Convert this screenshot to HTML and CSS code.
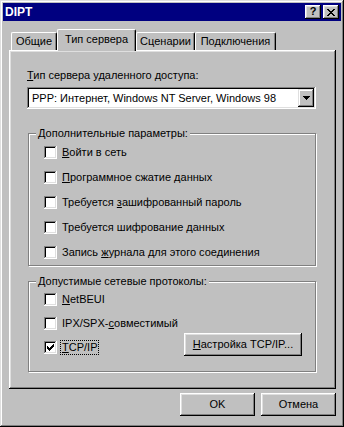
FILE: index.html
```html
<!DOCTYPE html>
<html>
<head>
<meta charset="utf-8">
<link rel="stylesheet" href="styles.css">
</head>
<body>
<div class="window">
  <div class="titlebar">
    <span class="title">DIPT</span>
    <div class="tbtns">
      <div class="tbtn help">?</div>
      <div class="tbtn close">
        <svg width="8" height="7" viewBox="0 0 8 7" shape-rendering="crispEdges">
          <path d="M0 0h2v1h-2zM6 0h2v1h-2zM1 1h2v1h-2zM5 1h2v1h-2zM2 2h4v1h-4zM3 3h2v1h-2zM2 4h4v1h-4zM1 5h2v1h-2zM5 5h2v1h-2zM0 6h2v1h-2zM6 6h2v1h-2z" fill="#000"/>
        </svg>
      </div>
    </div>
  </div>
  <div class="body">
    <div class="tabs">
      <div class="tab t1">Общие</div>
      <div class="tab t2 active">Тип сервера</div>
      <div class="tab t3">Сценарии</div>
      <div class="tab t4">Подключения</div>
    </div>
    <div class="panel">
      <div class="label"><u>Т</u>ип сервера удаленного доступа:</div>
      <div class="combo">
        <span class="combo-text">PPP: Интернет, Windows NT Server, Windows 98</span>
        <span class="combo-btn">
          <svg width="7" height="4" viewBox="0 0 7 4" shape-rendering="crispEdges"><path d="M0 0h7v1h-7zM1 1h5v1h-5zM2 2h3v1h-3zM3 3h1v1h-1z" fill="#000"/></svg>
        </span>
      </div>
      <div class="group g1">
        <div class="legend">Дополнительные параметры:</div>
        <div class="row"><span class="cb"></span><span class="txt"><u>В</u>ойти в сеть</span></div>
        <div class="row"><span class="cb"></span><span class="txt"><u>П</u>рограммное сжатие данных</span></div>
        <div class="row"><span class="cb"></span><span class="txt">Требуется <u>з</u>ашифрованный пароль</span></div>
        <div class="row"><span class="cb"></span><span class="txt">Требуется шифрование данных</span></div>
        <div class="row"><span class="cb"></span><span class="txt">Запись <u>ж</u>урнала для этого соединения</span></div>
      </div>
      <div class="group g2">
        <div class="legend">Допустимые сетевые протоколы:</div>
        <div class="row2"><span class="cb"></span><span class="txt"><u>N</u>etBEUI</span></div>
        <div class="row2"><span class="cb"></span><span class="txt">IPX/SPX-<u>с</u>овместимый</span></div>
        <div class="row2">
          <span class="cb checked">
            <svg width="7" height="7" viewBox="0 0 7 7" shape-rendering="crispEdges"><path d="M6 0h1v1h-1zM5 1h2v1h-2zM0 2h1v1h-1zM4 2h3v1h-3zM0 3h2v1h-2zM3 3h3v1h-3zM0 4h5v1h-5zM1 5h3v1h-3zM2 6h1v1h-1z" fill="#000"/></svg>
          </span>
          <span class="txt focus"><u>Т</u>CP/IP</span>
          <div class="btn setup"><u>Н</u>астройка TCP/IP...</div>
        </div>
      </div>
    </div>
    <div class="buttons">
      <div class="btn dlg">OK</div>
      <div class="btn dlg">Отмена</div>
    </div>
  </div>
</div>
</body>
</html>
```
FILE: styles.css
```css
* { box-sizing: border-box; }
html, body { margin: 0; padding: 0; background: #c0c0c0; }
body {
  font-family: "Liberation Sans", Arial, sans-serif;
  font-size: 11px;
  line-height: 13px;
  color: #000;
}
u { text-decoration: underline; text-underline-offset: 1px; }
.window {
  width: 344px;
  height: 427px;
  padding: 3px;
  background: #c0c0c0;
  box-shadow: inset -1px -1px #000, inset 1px 1px #dfdfdf, inset -2px -2px #808080, inset 2px 2px #fff;
}
.titlebar {
  height: 18px;
  background: #000080;
  display: flex;
  align-items: center;
  justify-content: space-between;
  padding: 0 2px;
}
.title {
  color: #fff;
  font-weight: bold;
  font-size: 12px;
}
.tbtns { display: flex; gap: 2px; }
.tbtn {
  width: 16px;
  height: 14px;
  background: #c0c0c0;
  box-shadow: inset -1px -1px #000, inset 1px 1px #fff, inset -2px -2px #808080, inset 2px 2px #dfdfdf;
  display: flex;
  align-items: center;
  justify-content: center;
}
.help { font-weight: bold; font-size: 11px; line-height: 11px; padding-bottom: 1px; }
.close svg { display: block; margin-left: 0px; }
.body {
  padding: 8px 5px 0 6px;
}
.tabs {
  display: flex;
  align-items: flex-end;
  height: 21px;
  padding-left: 2px;
}
.tab {
  height: 18px;
  border-top: 1px solid #fff;
  border-left: 1px solid #fff;
  border-right: 1px solid #000;
  border-radius: 2px 2px 0 0;
  box-shadow: inset -1px 0 #808080;
  text-align: center;
  padding-top: 2px;
  background: #c0c0c0;
}
.t1 { width: 46px; }
.t2 { width: 79px; }
.t3 { width: 59px; }
.t4 { width: 81px; }
.tab.active {
  height: 22px;
  margin-bottom: -1px;
  position: relative;
  z-index: 1;
  padding-top: 3px;
}
.panel {
  height: 339px;
  background: #c0c0c0;
  box-shadow: inset -1px -1px #000, inset 1px 1px #fff, inset -2px -2px #808080, inset 2px 2px #dfdfdf;
  padding: 19px 0 0 18px;
}
.label { height: 13px; }
.combo {
  margin-top: 5px;
  width: 289px;
  height: 22px;
  background: #fff;
  box-shadow: inset -1px -1px #fff, inset 1px 1px #808080, inset -2px -2px #dfdfdf, inset 2px 2px #000;
  display: flex;
  align-items: center;
  padding: 2px;
}
.combo-text { flex: 1; padding-left: 3px; }
.combo-btn {
  width: 16px;
  height: 18px;
  background: #c0c0c0;
  box-shadow: inset -1px -1px #000, inset 1px 1px #dfdfdf, inset -2px -2px #808080, inset 2px 2px #fff;
  display: flex;
  align-items: center;
  justify-content: center;
}
.combo-btn svg { display: block; }
.group {
  width: 288px;
  margin-left: 1px;
  border: 1px solid #808080;
  box-shadow: 1px 1px 0 #fff, inset 1px 1px 0 #fff;
}
.g1 { margin-top: 24px; height: 133px; }
.g2 { margin-top: 15px; height: 91px; }
.legend {
  margin: -7px 0 0 7px;
  padding: 0 2px;
  background: #c0c0c0;
  width: fit-content;
  height: 13px;
}
.row {
  height: 25px;
  display: flex;
  align-items: center;
  padding-left: 15px;
}
.row2 {
  height: 24px;
  display: flex;
  align-items: flex-start;
  padding-left: 15px;
}
.row2 .cb { margin-top: 5px; }
.row2 .txt { margin-top: 5px; }
.cb {
  width: 13px;
  height: 13px;
  background: #fff;
  box-shadow: inset -1px -1px #fff, inset 1px 1px #808080, inset -2px -2px #dfdfdf, inset 2px 2px #000;
  margin-right: 5px;
  flex: none;
  display: flex;
  align-items: center;
  justify-content: center;
}
.cb svg { display: block; }
.focus { outline: 1px dotted #000; outline-offset: 0px; padding: 0 1px; margin-left: -1px; }
.btn {
  background: #c0c0c0;
  box-shadow: inset -1px -1px #000, inset 1px 1px #fff, inset -2px -2px #808080, inset 2px 2px #dfdfdf;
  display: flex;
  align-items: center;
  justify-content: center;
  height: 23px;
}
.setup {
  width: 118px;
  margin-left: auto;
  margin-right: 13px;
  margin-top: -3px;
}
.buttons {
  display: flex;
  justify-content: flex-end;
  gap: 6px;
  margin-top: 4px;
}
.dlg { width: 75px; }
```
